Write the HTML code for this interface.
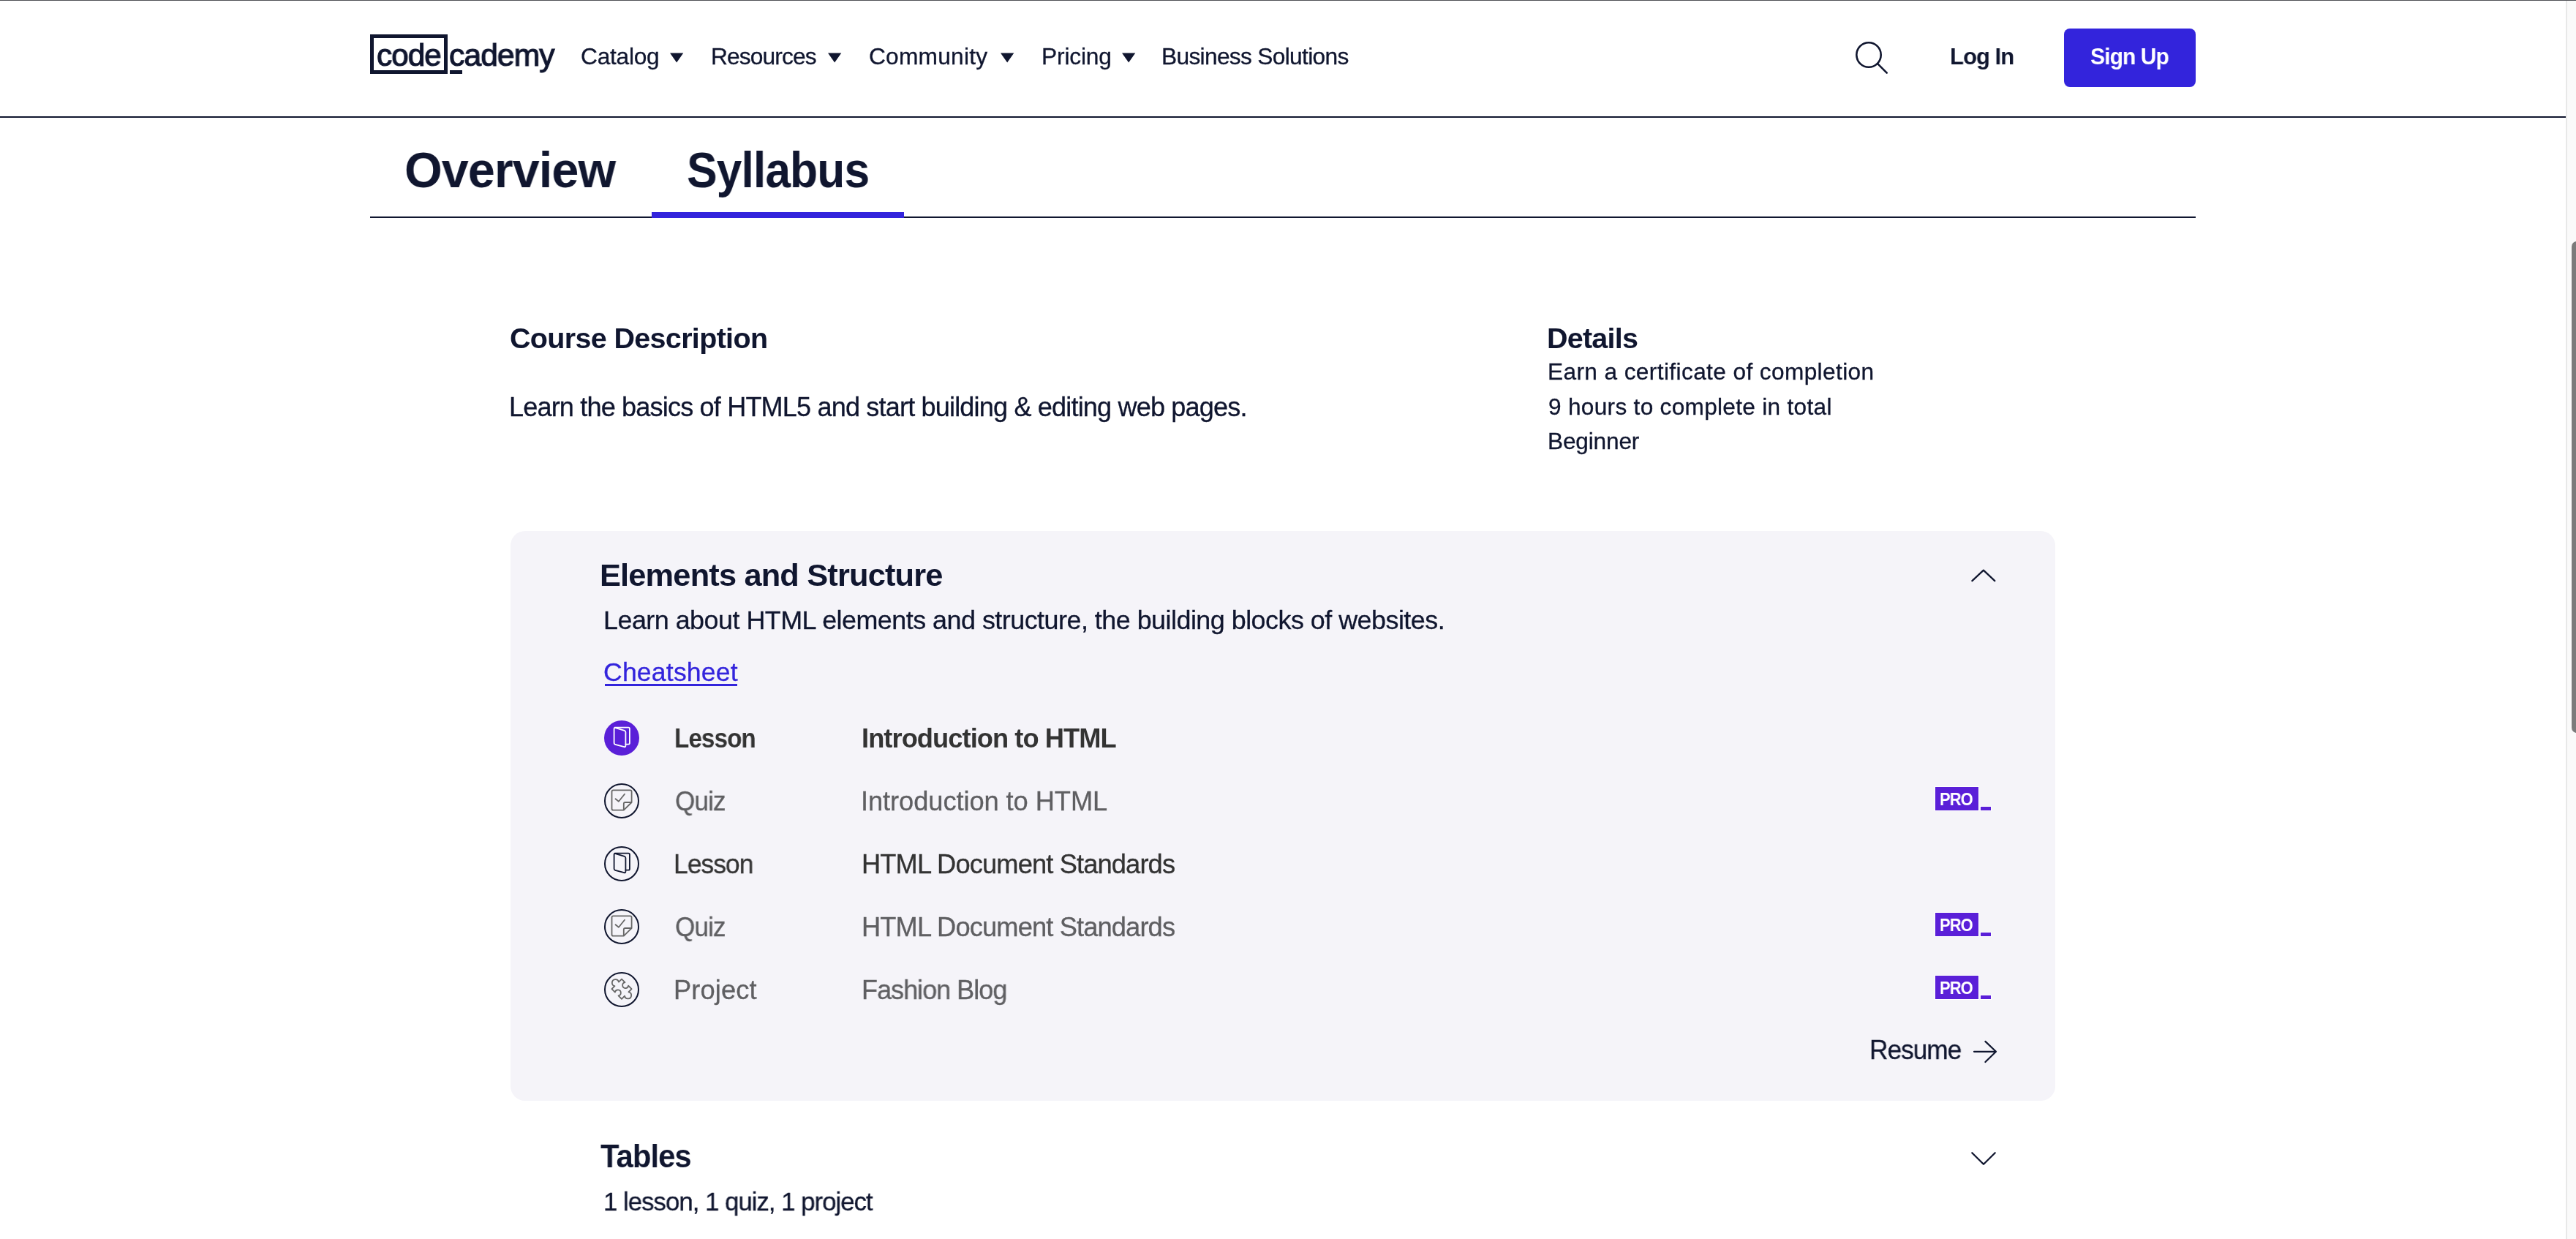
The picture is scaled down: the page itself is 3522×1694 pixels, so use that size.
<!DOCTYPE html>
<html><head><meta charset="utf-8"><title>Codecademy - Learn HTML Syllabus</title>
<style>
html,body{margin:0;padding:0;width:3522px;height:1694px;overflow:hidden;background:#fff}
body{position:relative;font-family:"Liberation Sans",sans-serif}
.a{position:absolute;display:block}
.t{position:absolute;white-space:nowrap;transform-origin:0 0;will-change:transform}
</style></head><body>
<div class='a' style='left:0;top:0;width:3522px;height:1px;background:#505156'></div>
<div class='a' style='left:0;top:159px;width:3508px;height:2px;background:#10162f'></div>
<div class='a' style='left:506px;top:47px;width:106px;height:54px;border:5px solid #10162f;box-sizing:border-box'></div>
<div class='a' style='left:615px;top:96px;width:16.5px;height:5px;background:#10162f'></div>
<div class='t' style='left:514.52px;top:43.00px;font-size:43px;font-weight:400;color:#10162f;letter-spacing:-1.000px;line-height:64.5px;transform:scaleX(0.9830);-webkit-text-stroke:1.1px #10162f'>code</div>
<div class='t' style='left:614.01px;top:43.00px;font-size:43px;font-weight:400;color:#10162f;letter-spacing:-1.000px;line-height:64.5px;transform:scaleX(0.9931);-webkit-text-stroke:1.1px #10162f'>cademy</div>
<div class='t' style='left:794.20px;top:54.00px;font-size:31.69px;font-weight:400;color:#10162f;letter-spacing:-0.250px;line-height:47.535000000000004px;-webkit-text-stroke:0.3px #10162f'>Catalog</div>
<div class='t' style='left:971.80px;top:54.00px;font-size:31.69px;font-weight:400;color:#10162f;letter-spacing:-0.862px;line-height:47.535000000000004px;-webkit-text-stroke:0.3px #10162f'>Resources</div>
<div class='t' style='left:1188.30px;top:54.00px;font-size:31.69px;font-weight:400;color:#10162f;letter-spacing:0.238px;line-height:47.535000000000004px;-webkit-text-stroke:0.3px #10162f'>Community</div>
<div class='t' style='left:1423.60px;top:54.00px;font-size:31.69px;font-weight:400;color:#10162f;letter-spacing:-0.150px;line-height:47.535000000000004px;-webkit-text-stroke:0.3px #10162f'>Pricing</div>
<div class='t' style='left:1587.80px;top:54.00px;font-size:31.69px;font-weight:400;color:#10162f;letter-spacing:-0.676px;line-height:47.535000000000004px;-webkit-text-stroke:0.3px #10162f'>Business Solutions</div>
<div class='t' style='left:2666.17px;top:53.10px;font-size:32.17px;font-weight:700;color:#10162f;letter-spacing:-1.000px;line-height:48.255px;transform:scaleX(0.9648);'>Log In</div>
<svg class='a' style='left:914.6px;top:71px' width='21' height='17' viewBox='0 0 21 17'><polygon points='1,1.4 19.3,1.4 10.15,14.5' fill='#10162f'/></svg>
<svg class='a' style='left:1130.5px;top:71px' width='21' height='17' viewBox='0 0 21 17'><polygon points='1,1.4 19.3,1.4 10.15,14.5' fill='#10162f'/></svg>
<svg class='a' style='left:1366.9px;top:71px' width='21' height='17' viewBox='0 0 21 17'><polygon points='1,1.4 19.3,1.4 10.15,14.5' fill='#10162f'/></svg>
<svg class='a' style='left:1532.6px;top:71px' width='21' height='17' viewBox='0 0 21 17'><polygon points='1,1.4 19.3,1.4 10.15,14.5' fill='#10162f'/></svg>
<svg class='a' style='left:2530px;top:50px' width='60' height='60' viewBox='0 0 60 60'><circle cx='25' cy='25' r='16.7' fill='none' stroke='#10162f' stroke-width='2.6'/><line x1='37.2' y1='37.2' x2='49.7' y2='49.7' stroke='#10162f' stroke-width='2.6' stroke-linecap='round'/></svg>
<div class='a' style='left:2822px;top:39px;width:180px;height:80px;border-radius:8px;background:#3324dc'></div>
<div class='t' style='left:2858.07px;top:53.00px;font-size:32.17px;font-weight:700;color:#ffffff;letter-spacing:-1.000px;line-height:48.255px;transform:scaleX(0.9345);'>Sign Up</div>
<div class='t' style='left:553.48px;top:181.20px;font-size:68.25px;font-weight:700;color:#10162f;letter-spacing:-1.000px;line-height:102.375px;transform:scaleX(0.9748);'>Overview</div>
<div class='t' style='left:939.17px;top:181.20px;font-size:68.25px;font-weight:700;color:#10162f;letter-spacing:-1.000px;line-height:102.375px;transform:scaleX(0.9138);'>Syllabus</div>
<div class='a' style='left:506px;top:296px;width:2496px;height:2px;background:#10162f'></div>
<div class='a' style='left:891px;top:290px;width:345px;height:8px;background:#3324dc'></div>
<div class='t' style='left:697.40px;top:433.40px;font-size:39.49px;font-weight:700;color:#10162f;letter-spacing:-0.659px;line-height:59.235px;'>Course Description</div>
<div class='t' style='left:696.40px;top:529.60px;font-size:36.07px;font-weight:400;color:#10162f;letter-spacing:-0.828px;line-height:54.105000000000004px;-webkit-text-stroke:0.3px #10162f'>Learn the basics of HTML5 and start building &amp; editing web pages.</div>
<div class='t' style='left:2115.40px;top:433.30px;font-size:39.49px;font-weight:700;color:#10162f;letter-spacing:-0.767px;line-height:59.235px;'>Details</div>
<div class='t' style='left:2116.40px;top:485.00px;font-size:31.59px;font-weight:400;color:#10162f;letter-spacing:0.406px;line-height:47.385px;-webkit-text-stroke:0.3px #10162f'>Earn a certificate of completion</div>
<div class='t' style='left:2117.40px;top:532.50px;font-size:31.59px;font-weight:400;color:#10162f;letter-spacing:0.307px;line-height:47.385px;-webkit-text-stroke:0.3px #10162f'>9 hours to complete in total</div>
<div class='t' style='left:2116.40px;top:580.00px;font-size:31.59px;font-weight:400;color:#10162f;letter-spacing:-0.157px;line-height:47.385px;-webkit-text-stroke:0.3px #10162f'>Beginner</div>
<div class='a' style='left:698px;top:726px;width:2112px;height:779px;border-radius:20px;background:#f5f4f9'></div>
<div class='t' style='left:819.50px;top:754.20px;font-size:43.39px;font-weight:700;color:#10162f;letter-spacing:-0.833px;line-height:65.08500000000001px;'>Elements and Structure</div>
<div class='t' style='left:824.60px;top:821.90px;font-size:35.88px;font-weight:400;color:#10162f;letter-spacing:-0.507px;line-height:53.82000000000001px;-webkit-text-stroke:0.3px #10162f'>Learn about HTML elements and structure, the building blocks of websites.</div>
<div class='t' style='left:824.70px;top:893.40px;font-size:35.59px;font-weight:400;color:#3324dc;letter-spacing:0.189px;line-height:53.385000000000005px;-webkit-text-stroke:0.3px #3324dc'>Cheatsheet</div>
<div class='a' style='left:826.7px;top:935px;width:181.7px;height:3px;background:#3324dc'></div>
<svg class='a' style='left:2690px;top:770px' width='44' height='30' viewBox='0 0 44 30'><polyline points='6.4,24.2 21.9,9.6 37.3,24.2' fill='none' stroke='#10162f' stroke-width='2.3' stroke-linecap='round' stroke-linejoin='round'/></svg>
<svg class='a' style='left:826px;top:984.7px' width='48' height='48' viewBox='0 0 48 48'><circle cx='24' cy='24' r='24' fill='#5a1fd8'/><path d='M14.6 9.6 L33.2 9.6 Q34.9 9.6 34.9 11.3 L34.9 30.9 Q34.9 32.6 33.2 32.6 L29.4 32.6' fill='none' stroke='#ffffff' stroke-width='1.8' stroke-linejoin='round' stroke-linecap='round'/><path d='M13.6 11.6 Q13.6 9.6 15.5 10.2 L27.8 13.8 Q29.4 14.3 29.4 16.1 L29.4 34.6 Q29.4 36.7 27.5 36.1 L15.1 32.8 Q13.6 32.4 13.6 30.8 Z' fill='none' stroke='#ffffff' stroke-width='1.8' stroke-linejoin='round'/></svg>
<svg class='a' style='left:826px;top:1071.0px' width='48' height='48' viewBox='0 0 48 48'><circle cx='24' cy='24' r='23' fill='none' stroke='#10162f' stroke-width='2'/><path d='M12.5 9.3 H35.6 Q37.6 9.3 37.6 11.3 V26 L26.8 36.7 H12.5 Q10.5 36.7 10.5 34.7 V11.3 Q10.5 9.3 12.5 9.3 Z' fill='none' stroke='#666666' stroke-width='1.8' stroke-linejoin='round'/><path d='M26.8 36.7 V28 Q26.8 26 28.8 26 H37.6' fill='none' stroke='#666666' stroke-width='1.8' stroke-linejoin='round'/><path d='M15.5 21.2 L19.9 24.8 L28 14.8' fill='none' stroke='#666666' stroke-width='1.8' stroke-linejoin='round' stroke-linecap='round'/></svg>
<svg class='a' style='left:826px;top:1157.0px' width='48' height='48' viewBox='0 0 48 48'><circle cx='24' cy='24' r='23' fill='none' stroke='#10162f' stroke-width='2'/><path d='M14.6 9.6 L33.2 9.6 Q34.9 9.6 34.9 11.3 L34.9 30.9 Q34.9 32.6 33.2 32.6 L29.4 32.6' fill='none' stroke='#10162f' stroke-width='1.8' stroke-linejoin='round' stroke-linecap='round'/><path d='M13.6 11.6 Q13.6 9.6 15.5 10.2 L27.8 13.8 Q29.4 14.3 29.4 16.1 L29.4 34.6 Q29.4 36.7 27.5 36.1 L15.1 32.8 Q13.6 32.4 13.6 30.8 Z' fill='none' stroke='#10162f' stroke-width='1.8' stroke-linejoin='round'/></svg>
<svg class='a' style='left:826px;top:1243.3px' width='48' height='48' viewBox='0 0 48 48'><circle cx='24' cy='24' r='23' fill='none' stroke='#10162f' stroke-width='2'/><path d='M12.5 9.3 H35.6 Q37.6 9.3 37.6 11.3 V26 L26.8 36.7 H12.5 Q10.5 36.7 10.5 34.7 V11.3 Q10.5 9.3 12.5 9.3 Z' fill='none' stroke='#666666' stroke-width='1.8' stroke-linejoin='round'/><path d='M26.8 36.7 V28 Q26.8 26 28.8 26 H37.6' fill='none' stroke='#666666' stroke-width='1.8' stroke-linejoin='round'/><path d='M15.5 21.2 L19.9 24.8 L28 14.8' fill='none' stroke='#666666' stroke-width='1.8' stroke-linejoin='round' stroke-linecap='round'/></svg>
<svg class='a' style='left:826px;top:1329.3px' width='48' height='48' viewBox='0 0 48 48'><circle cx='24' cy='24' r='23' fill='none' stroke='#10162f' stroke-width='2'/><path transform='translate(24 23.2) rotate(45)' d='M-9.6 -9.6 L-3.27 -9.6 A4 4 0 1 0 3.27 -9.6 L9.6 -9.6 L9.6 -3.86 A4.6 4.6 0 1 1 9.6 3.86 L9.6 9.6 L3.27 9.6 A4 4 0 1 0 -3.27 9.6 L-9.6 9.6 L-9.6 3.86 A4.6 4.6 0 1 1 -9.6 -3.86 Z' fill='none' stroke='#666666' stroke-width='1.8' stroke-linejoin='round'/></svg>
<div class='t' style='left:922.27px;top:983.20px;font-size:36.27px;font-weight:700;color:#333333;letter-spacing:-1.000px;line-height:54.405px;transform:scaleX(0.9161);'>Lesson</div>
<div class='t' style='left:1178.40px;top:983.20px;font-size:36.27px;font-weight:700;color:#333333;letter-spacing:-0.942px;line-height:54.405px;'>Introduction to HTML</div>
<div class='t' style='left:922.93px;top:1068.90px;font-size:36.27px;font-weight:400;color:#5f5f62;letter-spacing:-1.000px;line-height:54.405px;transform:scaleX(0.9696);-webkit-text-stroke:0.3px #5f5f62'>Quiz</div>
<div class='t' style='left:1177.40px;top:1068.90px;font-size:36.27px;font-weight:400;color:#5f5f62;letter-spacing:-0.074px;line-height:54.405px;-webkit-text-stroke:0.3px #5f5f62'>Introduction to HTML</div>
<div class='t' style='left:921.27px;top:1155.30px;font-size:36.27px;font-weight:400;color:#333333;letter-spacing:-1.000px;line-height:54.405px;transform:scaleX(0.9776);-webkit-text-stroke:0.3px #333333'>Lesson</div>
<div class='t' style='left:1177.80px;top:1155.30px;font-size:36.27px;font-weight:400;color:#333333;letter-spacing:-0.868px;line-height:54.405px;-webkit-text-stroke:0.3px #333333'>HTML Document Standards</div>
<div class='t' style='left:922.93px;top:1240.90px;font-size:36.27px;font-weight:400;color:#5f5f62;letter-spacing:-1.000px;line-height:54.405px;transform:scaleX(0.9696);-webkit-text-stroke:0.3px #5f5f62'>Quiz</div>
<div class='t' style='left:1177.80px;top:1240.90px;font-size:36.27px;font-weight:400;color:#5f5f62;letter-spacing:-0.868px;line-height:54.405px;-webkit-text-stroke:0.3px #5f5f62'>HTML Document Standards</div>
<div class='t' style='left:921.20px;top:1327.00px;font-size:36.27px;font-weight:400;color:#5f5f62;letter-spacing:0.133px;line-height:54.405px;-webkit-text-stroke:0.3px #5f5f62'>Project</div>
<div class='t' style='left:1177.82px;top:1327.00px;font-size:36.27px;font-weight:400;color:#5f5f62;letter-spacing:-1.000px;line-height:54.405px;transform:scaleX(0.9934);-webkit-text-stroke:0.3px #5f5f62'>Fashion Blog</div>
<div class='a' style='left:2646px;top:1076px;width:59px;height:32px;background:#5a1fd8;box-shadow:0 0 0 1px #fff'></div><div class='a' style='left:2708px;top:1103px;width:14px;height:5px;background:#5a1fd8;box-shadow:0 0 0 1px #fff'></div>
<div class='a' style='left:2646px;top:1248px;width:59px;height:32px;background:#5a1fd8;box-shadow:0 0 0 1px #fff'></div><div class='a' style='left:2708px;top:1275px;width:14px;height:5px;background:#5a1fd8;box-shadow:0 0 0 1px #fff'></div>
<div class='a' style='left:2646px;top:1334px;width:59px;height:32px;background:#5a1fd8;box-shadow:0 0 0 1px #fff'></div><div class='a' style='left:2708px;top:1361px;width:14px;height:5px;background:#5a1fd8;box-shadow:0 0 0 1px #fff'></div>
<div class='t' style='left:2652.17px;top:1074.50px;font-size:24px;font-weight:700;color:#ffffff;letter-spacing:-1.000px;line-height:36.0px;transform:scaleX(0.9149);'>PRO</div>
<div class='t' style='left:2652.17px;top:1246.50px;font-size:24px;font-weight:700;color:#ffffff;letter-spacing:-1.000px;line-height:36.0px;transform:scaleX(0.9149);'>PRO</div>
<div class='t' style='left:2652.17px;top:1332.50px;font-size:24px;font-weight:700;color:#ffffff;letter-spacing:-1.000px;line-height:36.0px;transform:scaleX(0.9149);'>PRO</div>
<div class='t' style='left:2555.81px;top:1409.10px;font-size:36.56px;font-weight:400;color:#10162f;letter-spacing:-1.000px;line-height:54.84px;transform:scaleX(0.9630);-webkit-text-stroke:0.3px #10162f'>Resume</div>
<svg class='a' style='left:2690px;top:1415px' width='50' height='46' viewBox='0 0 50 46'><path d='M9 22.8 H39 M24.4 8.9 L39 22.8 L24.4 37' fill='none' stroke='#10162f' stroke-width='2.2' stroke-linecap='round' stroke-linejoin='round'/></svg>
<div class='t' style='left:821.00px;top:1548.30px;font-size:43.88px;font-weight:700;color:#10162f;letter-spacing:-1.000px;line-height:65.82000000000001px;transform:scaleX(0.9535);'>Tables</div>
<div class='t' style='left:825.22px;top:1616.90px;font-size:35.1px;font-weight:400;color:#10162f;letter-spacing:-1.000px;line-height:52.650000000000006px;transform:scaleX(0.9914);-webkit-text-stroke:0.3px #10162f'>1 lesson, 1 quiz, 1 project</div>
<svg class='a' style='left:2690px;top:1566px' width='44' height='34' viewBox='0 0 44 34'><polyline points='6.3,10.3 22,25.7 37.7,10.3' fill='none' stroke='#10162f' stroke-width='2.3' stroke-linecap='round' stroke-linejoin='round'/></svg>
<div class='a' style='left:3508px;top:1px;width:2px;height:1693px;background:#e8e8e8'></div>
<div class='a' style='left:3510px;top:1px;width:12px;height:1693px;background:#fafafa'></div>
<div class='a' style='left:3516px;top:329.5px;width:14px;height:672px;border-radius:7px;background:#7b7b7b'></div>
</body></html>
